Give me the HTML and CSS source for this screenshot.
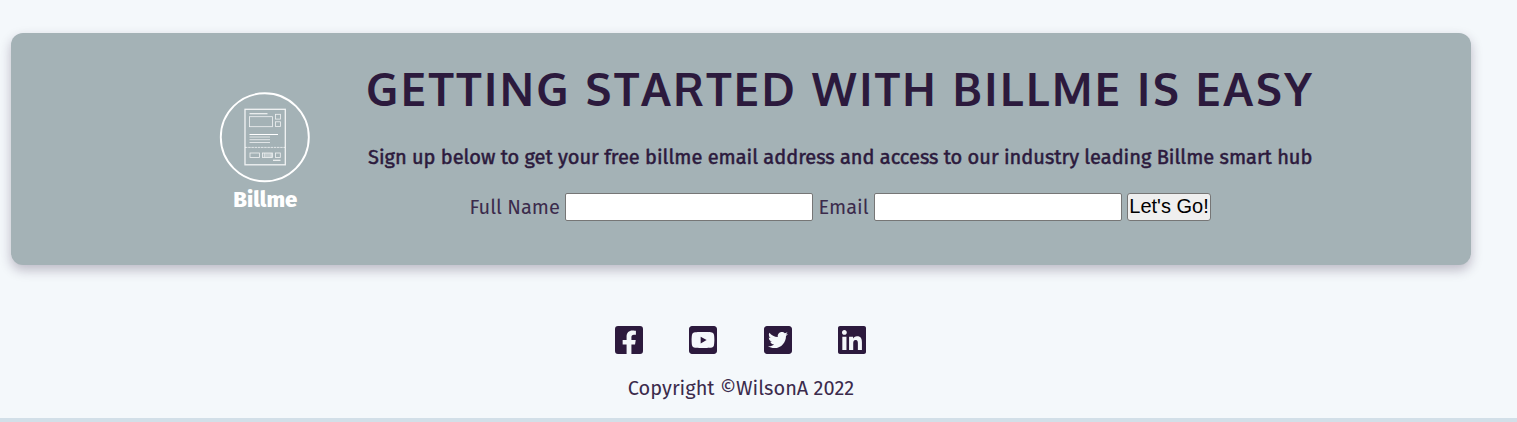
FILE: index.html
```html
<!DOCTYPE html>
<html lang="en">
<head>
<meta charset="utf-8">
<title>Billme</title>
<link rel="stylesheet" href="styles.css">
</head>
<body>
<main class="page">
  <section class="signup">
    <svg class="logo" viewBox="0 0 110 130" fill="none" stroke="#fff">
      <circle cx="54.8" cy="52.3" r="44" stroke-width="1.9"/>
      <rect x="35" y="24.3" width="40.3" height="55.5" stroke-width="1.3" opacity=".85"/>
      <g stroke-width=".8" opacity=".85">
        <rect x="39.5" y="31.7" width="23" height="10"/>
        <rect x="65.4" y="29.3" width="5" height="4.8"/>
        <rect x="65.4" y="36.8" width="5" height="4.8"/>
        <rect x="40" y="68" width="9.5" height="4.4"/>
        <rect x="52.5" y="68" width="10" height="4.4"/>
        <rect x="65.5" y="68" width="4.8" height="4.4"/>
        <path d="M35 62.4H75" stroke-dasharray="2.5 .7"/>
        <path d="M39.5 52H60M39.5 54.7H60M39.5 57.5H60"/>
        <path d="M54.3 68v4.4M56 68v4.4M58 68v4.4M60 68v4.4M61.3 68v4.4"/>
      </g>
      <path d="M39.5 28.8H57.5M39.5 49.5H68M63 75.3H70.5" stroke-width="1.1"/>
      <text class="logo-name" x="55.3" y="121.6" text-anchor="middle" textLength="64" lengthAdjust="spacingAndGlyphs">Billme</text>
    </svg>
    <div class="content">
      <h2 class="title">GETTING STARTED WITH BILLME IS EASY</h2>
      <p class="lead">Sign up below to get your free billme email address and access to our industry leading Billme smart hub</p>
      <form class="form">
        <label class="label label-name" for="name">Full Name</label>
        <input class="field" id="name" type="text">
        <label class="label label-email" for="email">Email</label>
        <input class="field" id="email" type="email">
        <button class="submit" type="button">Let's Go!</button>
      </form>
    </div>
  </section>
  <footer class="footer">
    <div class="social">
      <svg viewBox="0 32 448 448"><path d="M400 32H48A48 48 0 0 0 0 80v352a48 48 0 0 0 48 48h137.25V327.69h-63V256h63v-54.64c0-62.15 37-96.48 93.67-96.48 27.14 0 55.52 4.84 55.52 4.84v61h-31.27c-30.81 0-40.42 19.12-40.42 38.73V256h68.78l-11 71.69h-57.78V480H400a48 48 0 0 0 48-48V80a48 48 0 0 0-48-48z"/></svg>
      <svg viewBox="0 32 448 448"><path d="M186.8 202.1l95.2 54.1-95.2 54.1V202.1zM448 80v352c0 26.5-21.5 48-48 48H48c-26.5 0-48-21.5-48-48V80c0-26.5 21.5-48 48-48h352c26.5 0 48 21.5 48 48zm-42 176.3s0-59.6-7.6-88.2c-4.2-15.8-16.5-28.2-32.2-32.4C337.9 128 224 128 224 128s-113.9 0-142.2 7.7c-15.7 4.2-28 16.6-32.2 32.4-7.6 28.5-7.6 88.2-7.6 88.2s0 59.6 7.6 88.2c4.2 15.8 16.5 27.7 32.2 31.9C110.1 384 224 384 224 384s113.9 0 142.2-7.7c15.7-4.2 28-16.1 32.2-31.9 7.6-28.5 7.6-88.1 7.6-88.1z"/></svg>
      <svg viewBox="0 32 448 448"><path d="M400 32H48C21.5 32 0 53.5 0 80v352c0 26.5 21.5 48 48 48h352c26.5 0 48-21.5 48-48V80c0-26.5-21.5-48-48-48zm-48.9 158.8c.2 2.8.2 5.7.2 8.5 0 86.7-66 186.6-186.6 186.6-37.2 0-71.7-10.8-100.7-29.4 5.3.6 10.4.8 15.8.8 30.7 0 58.9-10.4 81.4-28-28.8-.6-53-19.5-61.3-45.5 10.1 1.5 19.2 1.5 29.6-1.2-30-6.1-52.5-32.5-52.5-64.4v-.8c8.7 4.9 18.9 7.9 29.6 8.3a65.447 65.447 0 0 1-29.2-54.6c0-12.2 3.2-23.4 8.9-33.1 32.3 39.8 80.8 65.8 135.2 68.6-9.3-44.5 24-80.6 64-80.6 18.9 0 35.9 7.9 47.9 20.7 14.8-2.8 29-8.3 41.6-15.8-4.9 15.2-15.2 28-28.8 36.1 13.2-1.4 26-5.1 37.8-10.2-8.9 13.1-20.1 24.7-32.9 34z"/></svg>
      <svg viewBox="0 32 448 448"><path d="M416 32H31.9C14.3 32 0 46.5 0 64.3v383.4C0 465.5 14.3 480 31.9 480H416c17.6 0 32-14.5 32-32.3V64.3c0-17.8-14.4-32.3-32-32.3zM135.4 416H69V202.2h66.5V416zm-33.2-243c-21.3 0-38.5-17.3-38.5-38.5S80.9 96 102.2 96c21.2 0 38.5 17.3 38.5 38.5 0 21.3-17.2 38.5-38.5 38.5zm282.1 243h-66.4V312c0-24.8-.5-56.7-34.5-56.7-34.6 0-39.9 27-39.9 54.9V416h-66.4V202.2h63.7v29.2h.9c8.9-16.8 30.6-34.5 62.2-34.5 66.5 0 78.9 43.8 78.9 100.9V416z"/></svg>
    </div>
    <p class="copyright">Copyright ©WilsonA 2022</p>
  </footer>
</main>
<div class="bottom-bar"></div>
</body>
</html>
```
FILE: styles.css
```css
* { box-sizing: border-box; }
body {
  margin: 0;
  height: 422px;
  overflow: hidden;
  display: flex;
  flex-direction: column;
  background: #f4f8fb;
  color: #2c1a3d;
  font-family: "Fira Sans", "Noto Sans", sans-serif;
}
.page { flex: 1; padding: 33px 46px 0 11px; }
.signup {
  display: flex;
  height: 232px;
  padding-left: 199px;
  border-radius: 12px;
  background: #a4b2b6;
  box-shadow: 0 5px 12px rgba(44, 26, 61, .28);
}
.logo { flex: none; width: 110px; height: 130px; margin-top: 52px; }
.logo-name { fill: #fff; stroke: none; font: 800 21px "Fira Sans", "Noto Sans", sans-serif; }
.content { width: 946px; margin-left: 47px; white-space: nowrap; }
.title {
  margin: 25px 0 0 -1px;
  font-family: "Oxygen", "Noto Sans", sans-serif;
  font-size: 45px;
  line-height: 62px;
  font-weight: 700;
  letter-spacing: 2.46px;
}
.lead {
  margin: 23px 0 0 1px;
  font-size: 20px;
  line-height: 28px;
  font-weight: 400;
  -webkit-text-stroke: .5px #2c1a3d;
}
.form { display: flex; margin: 22px 0 0 102.5px; height: 28px; }
.label { font-size: 20px; line-height: 28px; color: #3b2b4c; }
.label-name { width: 95.5px; }
.label-email { width: 49.5px; margin: 0 6px 0 5.5px; }
.field { width: 248px; height: 28px; border: 1px solid #767676; border-radius: 2px; background: #fff; }
.submit {
  width: 84px;
  height: 28px;
  margin-left: 5px;
  padding: 0 0 2px;
  border: 1px solid #767676;
  border-radius: 3px;
  background: #efefef;
  color: #000;
  font: 20px/24px "Liberation Sans", Arial, sans-serif;
}
.footer { display: flex; flex-direction: column; align-items: center; padding-top: 61px; }
.social { display: flex; gap: 46.2px; margin-left: -1px; }
.social svg { width: 28px; height: 28px; fill: #2c1a3d; }
.copyright { margin: 20px 0 0; font-size: 20px; line-height: 28px; color: #3b2b4c; white-space: nowrap; }
.bottom-bar { height: 4px; background: #d2dfe8; }
```
